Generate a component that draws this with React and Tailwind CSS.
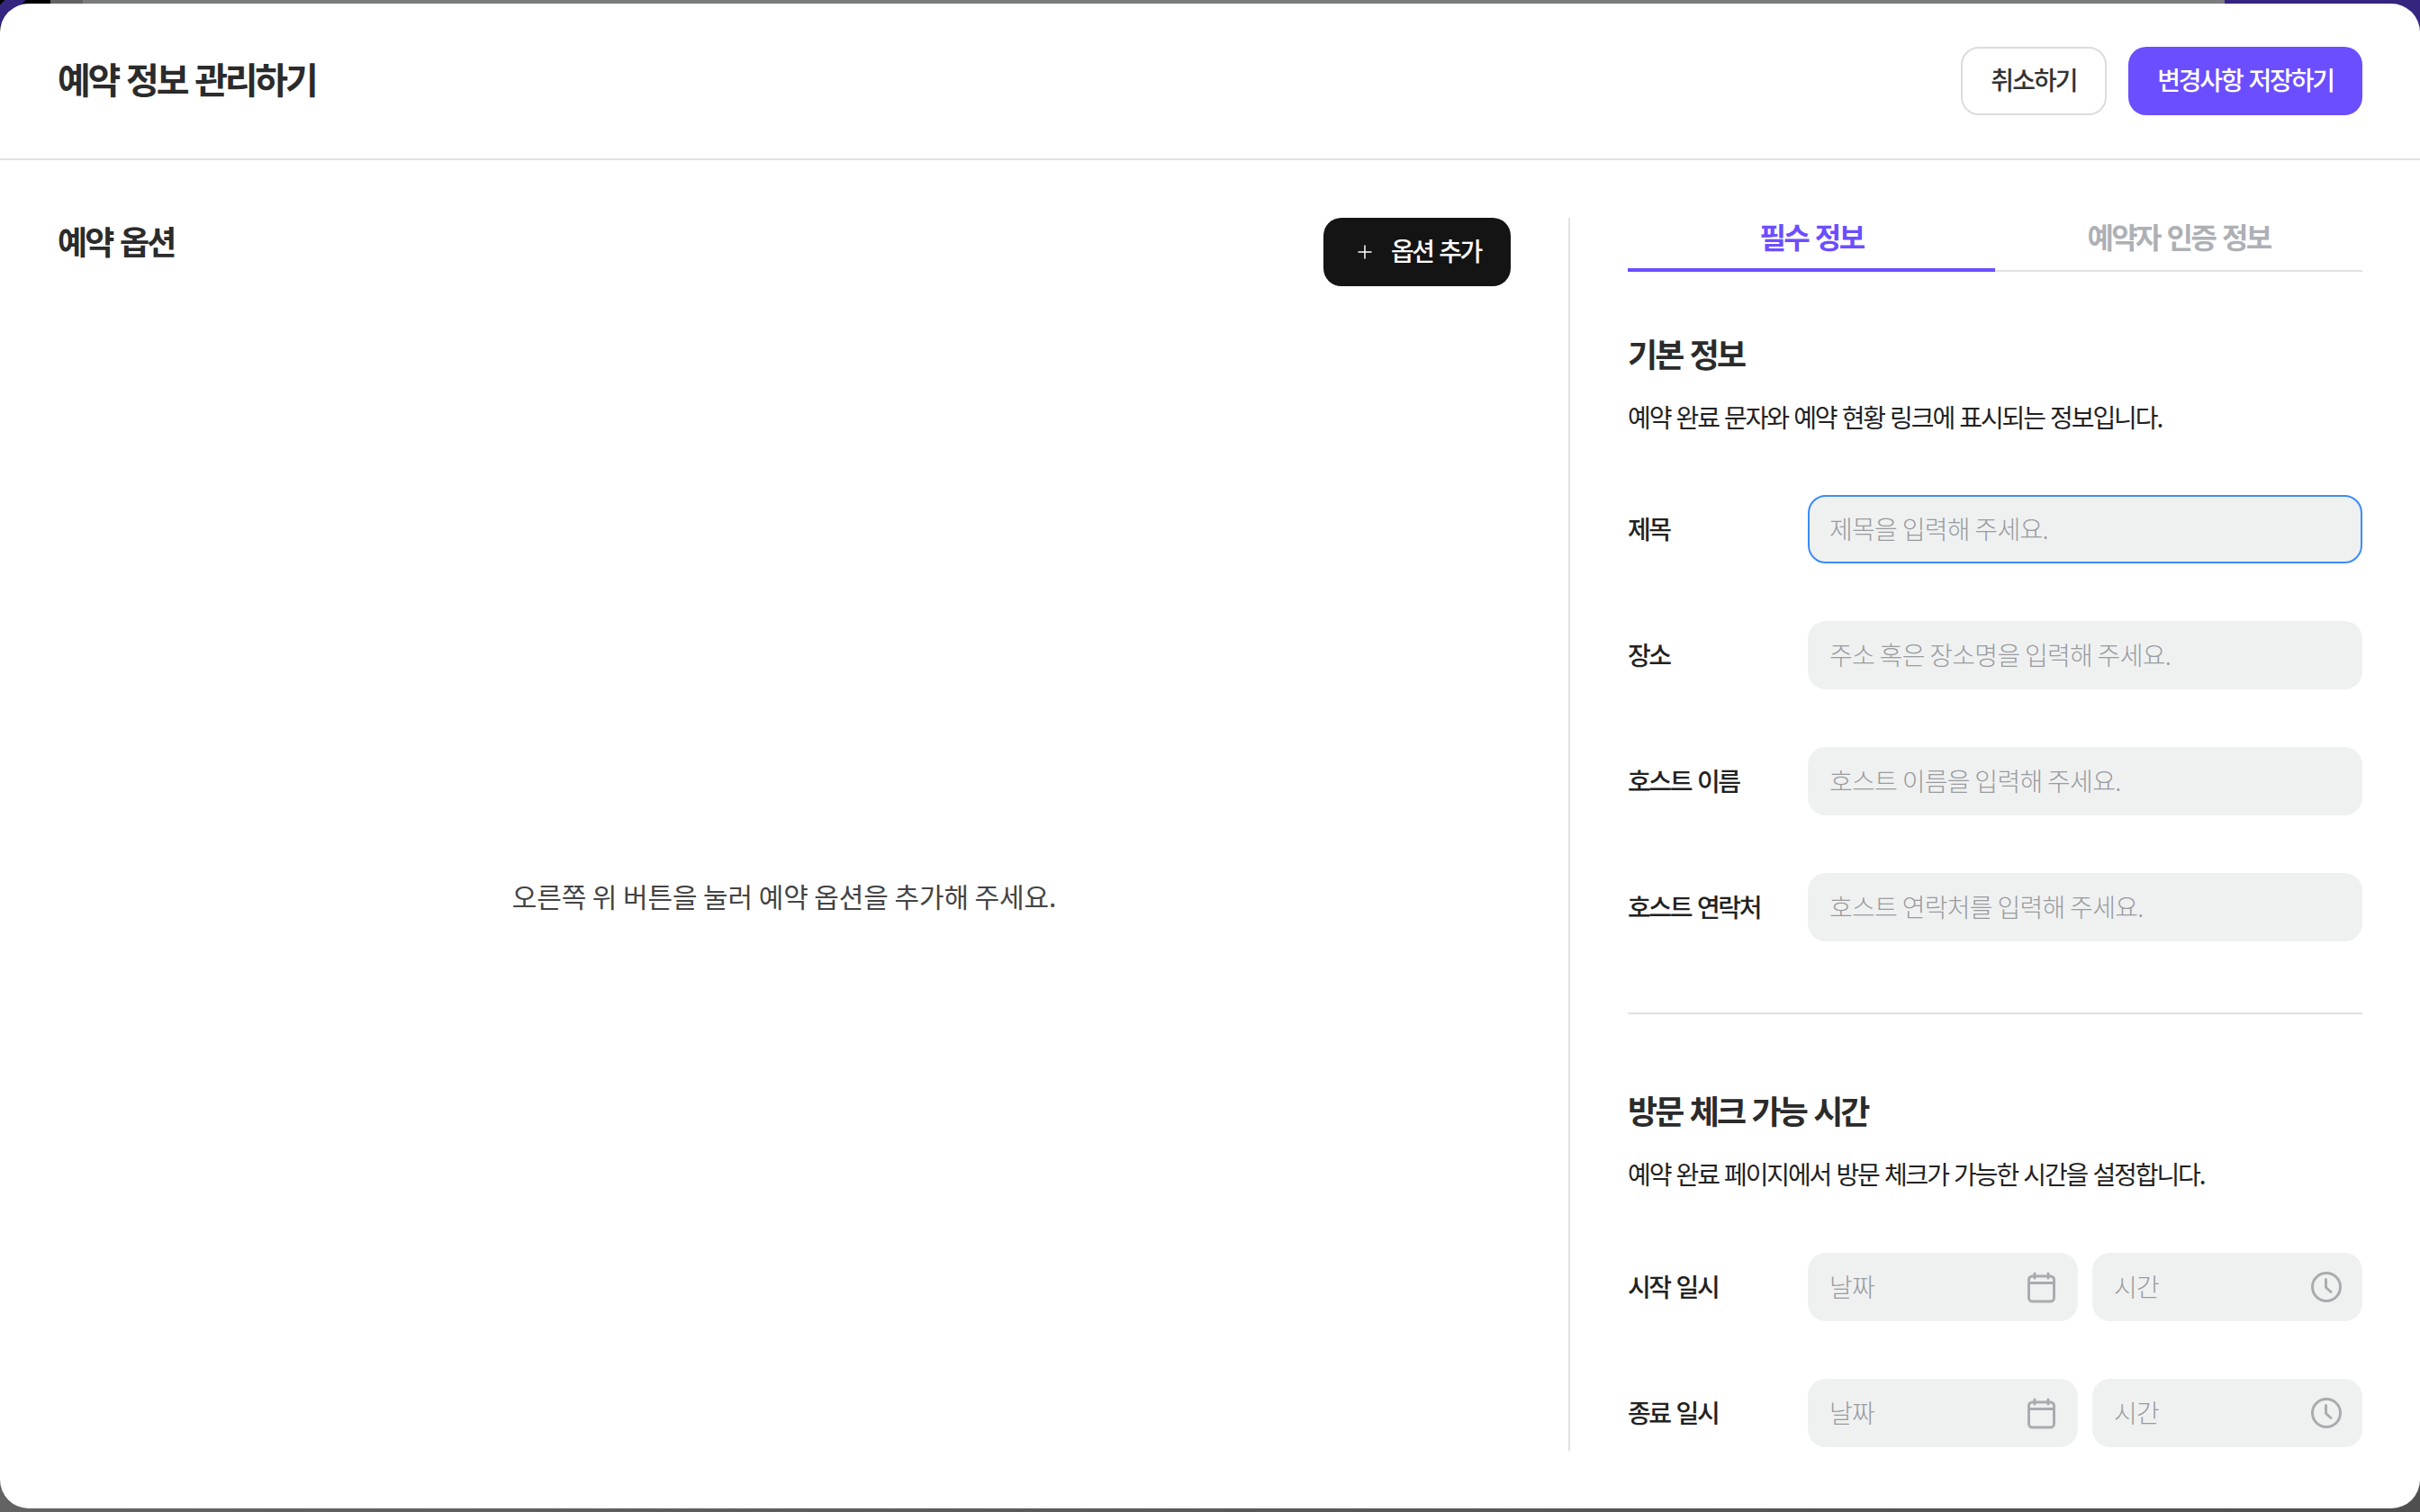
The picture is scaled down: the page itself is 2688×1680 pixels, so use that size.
import React from "react";
import { Plus } from "lucide-react";

const fields = [
  { label: "제목", placeholder: "제목을 입력해 주세요.", focused: true },
  { label: "장소", placeholder: "주소 혹은 장소명을 입력해 주세요." },
  { label: "호스트 이름", placeholder: "호스트 이름을 입력해 주세요." },
  { label: "호스트 연락처", placeholder: "호스트 연락처를 입력해 주세요." },
];

function CalendarIcon() {
  return (
    <svg width="40" height="40" viewBox="0 0 40 40" fill="none" stroke="#a9abae" strokeWidth="3" strokeLinecap="round" strokeLinejoin="round" className="shrink-0">
      <rect x="5.5" y="8" width="28" height="28" rx="4" />
      <path d="M5.5 15.5h28M12 5v5M27 5v5" />
    </svg>
  );
}

function ClockIcon() {
  return (
    <svg width="40" height="40" viewBox="0 0 40 40" fill="none" stroke="#a9abae" strokeWidth="3" strokeLinecap="round" strokeLinejoin="round" className="shrink-0">
      <circle cx="20" cy="20" r="15.5" />
      <path d="M19.5 11.5v9l5.5 5" />
    </svg>
  );
}

function TextField({ label, placeholder, focused }) {
  return (
    <div className="flex items-center">
      <label className="w-[200px] shrink-0 pb-[3px] text-[28px] font-medium tracking-[-2.4px] [word-spacing:3px] text-[#222]">{label}</label>
      <input
        placeholder={placeholder}
        className={
          focused
            ? "h-[76px] flex-1 rounded-[20px] border-2 border-[#3b8cf6] bg-[#eff1f1] px-[22px] pb-[3px] text-[28px] font-light tracking-[-0.7px] outline-none placeholder:text-[#999b9f]"
            : "h-[76px] flex-1 rounded-[20px] bg-[#eff1f1] px-6 pb-[3px] text-[28px] font-light tracking-[-0.7px] outline-none placeholder:text-[#999b9f]"
        }
      />
    </div>
  );
}

function DateTimeField({ label }) {
  return (
    <div className="flex items-center">
      <label className="w-[200px] shrink-0 pb-[3px] text-[28px] font-medium tracking-[-2.4px] [word-spacing:3px] text-[#222]">{label}</label>
      <div className="flex flex-1 gap-4">
        <div className="flex h-[76px] flex-1 items-center justify-between rounded-[20px] bg-[#eff1f1] pl-6 pr-[20px]">
          <span className="pb-[3px] text-[28px] font-light tracking-[-0.7px] text-[#999b9f]">날짜</span>
          <CalendarIcon />
        </div>
        <div className="flex h-[76px] flex-1 items-center justify-between rounded-[20px] bg-[#eff1f1] pl-6 pr-[20px]">
          <span className="pb-[3px] text-[28px] font-light tracking-[-0.7px] text-[#999b9f]">시간</span>
          <ClockIcon />
        </div>
      </div>
    </div>
  );
}

export default function App() {
  return (
    <div className="relative h-[1680px] w-[2688px] overflow-hidden font-['Noto_Sans_CJK_KR','Noto_Sans',sans-serif]">
      {/* what is left of the page behind the modal */}
      <div className="absolute inset-0 flex flex-col">
        <div className="flex-1 bg-[linear-gradient(90deg,#000_0,#000_56px,#626262_56px,#626262_92px,#7b7c7d_92px,#7b7c7d_2471px,#35257f_2471px)]" />
        <div className="flex-1 bg-[linear-gradient(90deg,#636363,#4f4f4f)]" />
      </div>
      <div className="absolute left-0 top-0 size-[30px] bg-[linear-gradient(135deg,#000_0,#000_4px,#35257f_4px,#35257f_20px,#000_20px)]" />

      <div className="relative mt-1 flex h-[1672px] flex-col rounded-[32px] bg-white">
        <header className="flex h-[174px] shrink-0 items-center justify-between border-b-2 border-[#e2e2e2] px-16">
          <h1 className="pb-[6px] text-[40px] font-bold tracking-[-3.2px] [word-spacing:3px] text-[#2b2b2b]">예약 정보 관리하기</h1>
          <div className="flex gap-6">
            <button className="h-[76px] w-[162px] rounded-[20px] border-2 border-[#dcdcdc] bg-white pb-1 text-[28px] font-medium tracking-[-1.9px] text-[#333]">
              취소하기
            </button>
            <button className="h-[76px] w-[260px] rounded-[20px] bg-[#6b4eff] pb-1 text-[28px] font-medium tracking-[-2.2px] [word-spacing:3px] text-white">
              변경사항 저장하기
            </button>
          </div>
        </header>

        <main className="flex min-h-0 flex-1 py-16">
          <section className="flex flex-1 flex-col px-16">
            <div className="flex items-start justify-between">
              <h2 className="-mt-0.5 text-[36px] font-bold tracking-[-2.8px] [word-spacing:3px] text-[#2b2b2b]">예약 옵션</h2>
              <button className="flex h-[76px] w-[208px] items-center gap-[17px] rounded-[20px] bg-[#141414] pb-1 pl-[34px] text-[28px] font-medium tracking-[-2.5px] [word-spacing:3px] text-white">
                <Plus size={24} strokeWidth={1.5} className="mt-1" />
                옵션 추가
              </button>
            </div>
            <div className="flex flex-1 items-center justify-center pt-[60px]">
              <p className="text-[30px] tracking-[-0.1px] text-[#444]">오른쪽 위 버튼을 눌러 예약 옵션을 추가해 주세요.</p>
            </div>
          </section>

          <section className="flex w-[946px] shrink-0 flex-col border-l-2 border-[#e2e2e2] px-16">
            <div className="flex h-[60px] shrink-0 border-b-2 border-[#e2e2e2]">
              <div className="-mb-0.5 flex h-[60px] flex-1 items-start justify-center border-b-4 border-[#6b4eff] text-[32px] font-bold leading-[41px] tracking-[-2.6px] [word-spacing:3px] text-[#6b4eff]">
                필수 정보
              </div>
              <div className="flex flex-1 items-start justify-center text-[32px] font-bold leading-[41px] tracking-[-2.6px] [word-spacing:3px] text-[#adb0b5]">
                예약자 인증 정보
              </div>
            </div>

            <h3 className="mt-[66px] text-[36px] font-bold leading-[48px] tracking-[-2.9px] [word-spacing:3px] text-[#2b2b2b]">기본 정보</h3>
            <p className="mt-[27px] text-[28px] leading-[40px] tracking-[-2.1px] [word-spacing:2px] text-[#222]">예약 완료 문자와 예약 현황 링크에 표시되는 정보입니다.</p>

            <div className="mt-[67px] flex flex-col gap-16">
              {fields.map((field) => (
                <TextField key={field.label} {...field} />
              ))}
            </div>

            <div className="mt-[79px] h-0.5 shrink-0 bg-[#e2e2e2]" />

            <h3 className="mt-[82px] text-[36px] font-bold leading-[48px] tracking-[-2.9px] [word-spacing:3px] text-[#2b2b2b]">방문 체크 가능 시간</h3>
            <p className="mt-[27px] text-[28px] leading-[40px] tracking-[-2.1px] [word-spacing:2px] text-[#222]">예약 완료 페이지에서 방문 체크가 가능한 시간을 설정합니다.</p>

            <div className="mt-[68px] flex flex-col gap-16">
              <DateTimeField label="시작 일시" />
              <DateTimeField label="종료 일시" />
            </div>
          </section>
        </main>
      </div>
    </div>
  );
}
